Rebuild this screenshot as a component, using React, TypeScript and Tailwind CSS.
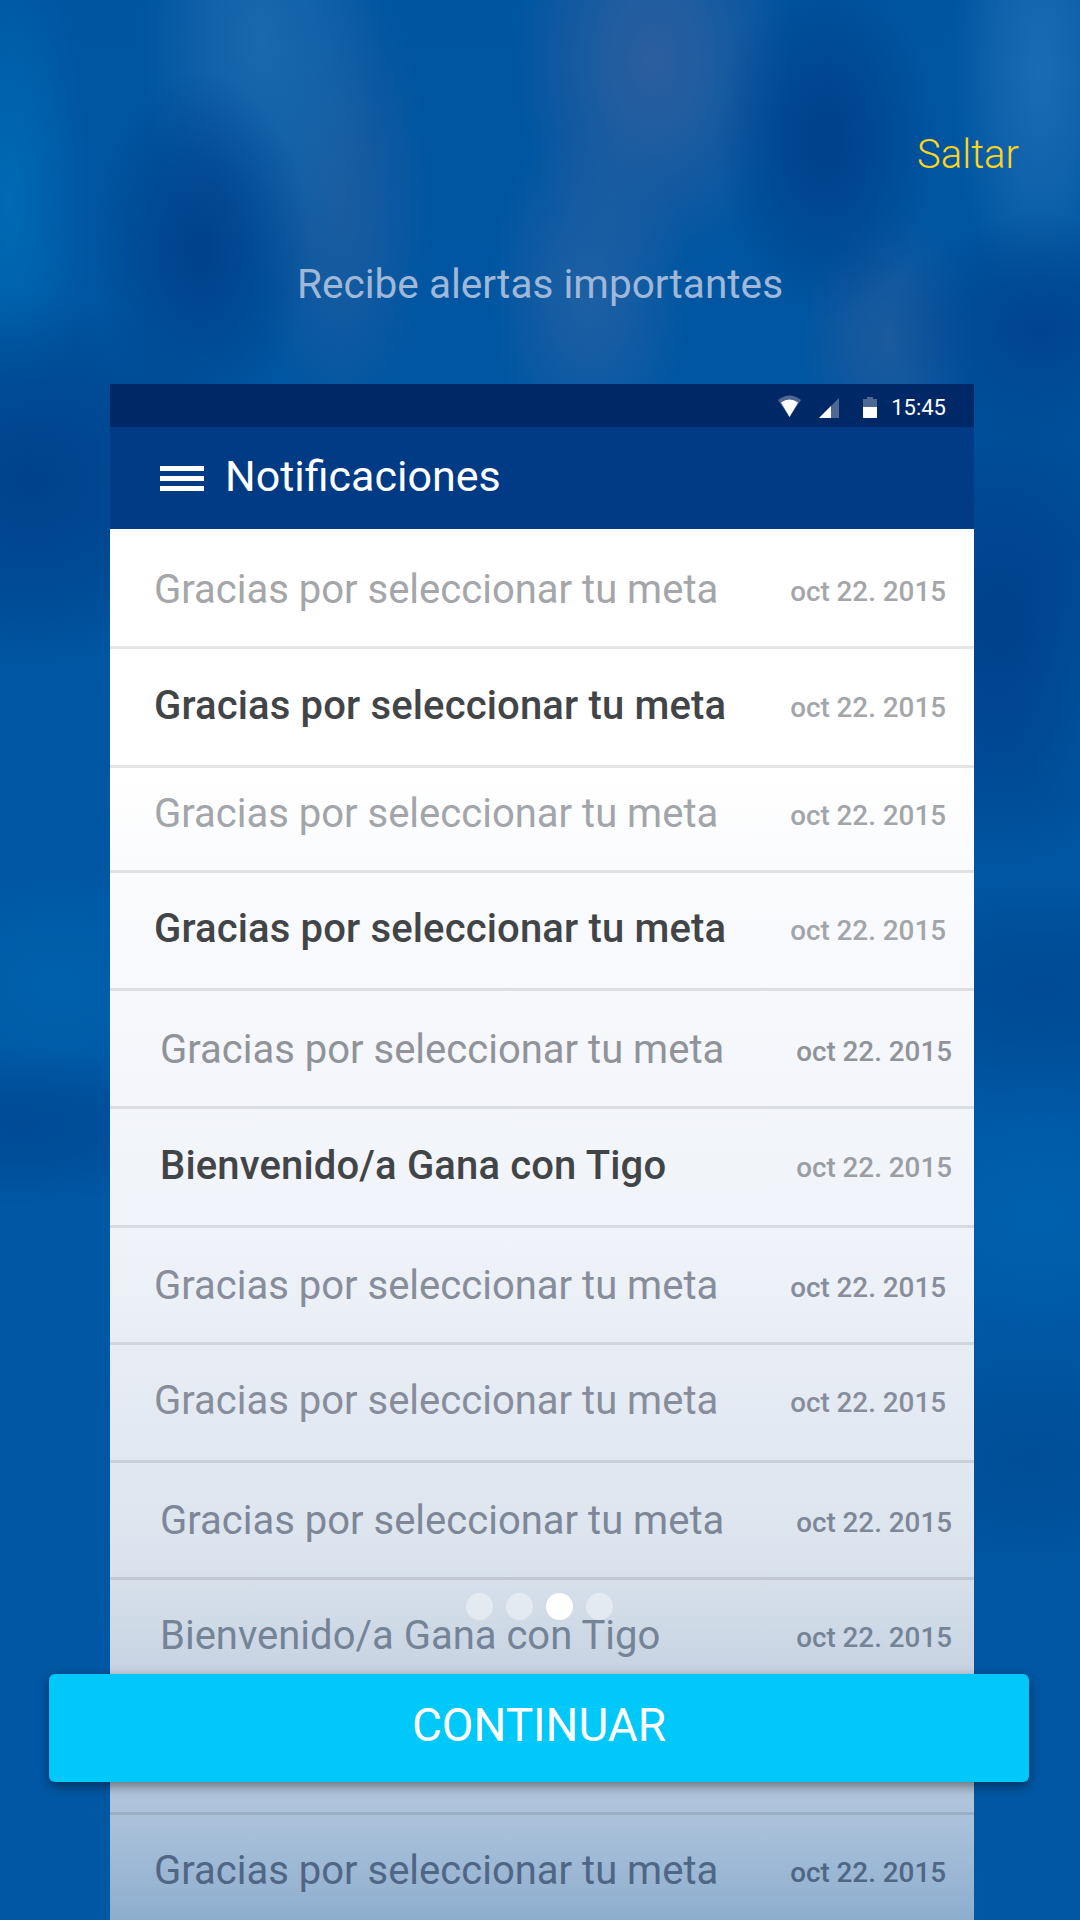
const rows = [
  { title: 'Gracias por seleccionar tu meta', h: 'h-[120px]', nudge: 'pt-[4px]', color: 'text-[#a4a6a9]' },
  { title: 'Gracias por seleccionar tu meta', bold: true, h: 'h-[119px]', nudge: 'pb-[3px]', color: 'text-[#a4a6a9]' },
  { title: 'Gracias por seleccionar tu meta', h: 'h-[105px]', nudge: 'pb-[10px]', color: 'text-[#a2a5a9]' },
  { title: 'Gracias por seleccionar tu meta', bold: true, h: 'h-[118px]', nudge: 'pb-[3px]', color: 'text-[#a2a5a9]' },
  { title: 'Gracias por seleccionar tu meta', shift: true, h: 'h-[118px]', nudge: 'pt-[2px]', color: 'text-[#909399]' },
  { title: 'Bienvenido/a Gana con Tigo', bold: true, shift: true, h: 'h-[119px]', nudge: 'pb-[3px]', color: 'text-[#9a9da3]' },
  { title: 'Gracias por seleccionar tu meta', h: 'h-[117px]', nudge: 'pt-[1px]', color: 'text-[#878d9b]' },
  { title: 'Gracias por seleccionar tu meta', h: 'h-[118px]', nudge: 'pb-[3px]', color: 'text-[#878d9b]' },
  { title: 'Gracias por seleccionar tu meta', shift: true, h: 'h-[117px]', nudge: 'pt-[2px]', color: 'text-[#7d8797]' },
  { title: 'Bienvenido/a Gana con Tigo', shift: true, h: 'h-[117px]', nudge: 'pb-[2px]', color: 'text-[#748496]' },
  { title: '', h: 'h-[118px]', nudge: 'pb-[0px]', color: 'text-[#748496]' },
  { title: 'Gracias por seleccionar tu meta', h: 'h-[118px]', nudge: 'pb-[4px]', color: 'text-[#4f6685]' },
]

function StatusIcons() {
  return (
    <>
      <svg className="mt-[1px]" width="23" height="22" viewBox="0 0 23 22">
        <path d="M0 5 Q11.500 -4 23 5 L11.500 22 Z" fill="#ffffff" fillOpacity="0.3" />
        <path d="M3 7.500 Q11.500 1.500 20 7.500 L11.500 22 Z" fill="#ffffff" />
      </svg>
      <svg className="ml-[18px] mt-[5px]" width="20" height="20" viewBox="0 0 20 20">
        <path d="M0 20 L20 0 V20 Z" fill="#ffffff" fillOpacity="0.3" />
        <path d="M0 20 L12 8 V20 Z" fill="#ffffff" />
      </svg>
      <svg className="ml-[24px] mt-[4px]" width="14" height="21" viewBox="0 0 14 21">
        <path d="M4 0 H10 V2 H14 V21 H0 V2 H4 Z" fill="#ffffff" fillOpacity="0.3" />
        <path d="M0 10 H14 V20 Q14 21 13 21 H1 Q0 21 0 20 Z" fill="#ffffff" />
      </svg>
    </>
  )
}

export default function App() {
  return (
    <div className="relative w-[1080px] h-[1920px] overflow-hidden font-['Roboto',sans-serif] bg-[radial-gradient(ellipse_110px_180px_at_200px_250px,#00428b,#00428bb0_40%,transparent),radial-gradient(ellipse_110px_180px_at_826px_140px,#00418a,#00418ab0_40%,transparent),radial-gradient(ellipse_150px_120px_at_1040px_330px,#00448e,#00448eb0_40%,transparent),radial-gradient(ellipse_190px_260px_at_1000px_620px,#00428c,#00428cb0_50%,transparent),radial-gradient(ellipse_220px_190px_at_30px_480px,#00438c,#00438cb0_50%,transparent),radial-gradient(ellipse_200px_80px_at_20px_1126px,#004a96,#004a96b0_40%,transparent),radial-gradient(ellipse_220px_120px_at_1040px_989px,#004a94,#004a94b0_40%,transparent),radial-gradient(ellipse_220px_130px_at_1030px_1460px,#004e98,#004e98b0_40%,transparent),radial-gradient(ellipse_140px_210px_at_654px_60px,#2b5f9f,#2b5f9fb0_40%,transparent),radial-gradient(ellipse_120px_240px_at_262px_40px,#1a68ad,#1a68adb0_40%,transparent),radial-gradient(ellipse_90px_240px_at_1040px_70px,#1a6cb2,#1a6cb2b0_40%,transparent),radial-gradient(ellipse_90px_230px_at_340px_200px,#1b5c9f,#1b5c9fb0_40%,transparent),radial-gradient(ellipse_100px_170px_at_590px_290px,#1e5fa3,#1e5fa3b0_40%,transparent),radial-gradient(ellipse_90px_130px_at_890px_340px,#1b5a9d,#1b5a9db0_40%,transparent),radial-gradient(ellipse_80px_260px_at_10px_200px,#006ab4,transparent),radial-gradient(ellipse_180px_130px_at_60px_985px,#0060ab,#0060abb0_40%,transparent),radial-gradient(ellipse_60px_130px_at_1075px_675px,#0068b3,transparent),radial-gradient(ellipse_200px_130px_at_1040px_1215px,#0060ad,#0060adb0_40%,transparent),linear-gradient(#0055a1,#0058a5)]">
      <div className="flex justify-end pt-[130px] pr-[61px]">
        <span className="text-[40px] leading-[50px] font-light text-[#ffd41c]">Saltar</span>
      </div>
      <h1 className="mt-[79px] text-center text-[40.6px] leading-[50px] font-normal text-[#a0b8d7]">Recibe alertas importantes</h1>

      <div className="mt-[75px] ml-[110px] w-[864px]">
        <div className="flex h-[43px] items-center justify-end bg-[#002766] pr-[28px]">
          <StatusIcons />
          <span className="ml-[14px] mt-[4px] text-[22px] leading-none text-white">15:45</span>
        </div>
        <div className="flex h-[102px] items-center gap-[21px] bg-[#013a85] pl-[50px]">
          <div className="flex w-[44px] flex-col gap-[5px]">
            <div className="h-[5px] bg-white" />
            <div className="h-[5px] bg-white" />
            <div className="h-[5px] bg-white" />
          </div>
          <span className="pb-[4px] text-[43px] leading-none text-white">Notificaciones</span>
        </div>

        <div className="bg-[linear-gradient(#ffffff_0%,#ffffff_17%,#fafbfd_25%,#f6f8fc_34%,#f0f3f9_50%,#e4eaf3_63%,#dbe4ee_73%,#c8d4e3_81%,#aec3db_91%,#a6bfd9_93%,#8aabcc_100%)]">
          {rows.map((row, i) => (
            <div key={i} className={`flex items-center justify-between border-b-[3px] border-black/10 ${row.h} ${row.nudge} ${row.shift ? 'pl-[50px] pr-[22px]' : 'pl-[44px] pr-[28px]'}`}>
              <span className={`text-[40px] leading-none ${row.bold ? 'font-medium tracking-[0.15px] text-[#424548]' : row.color}`}>{row.title}</span>
              {row.title && <span className={`mt-[4px] text-[27.8px] leading-none font-medium ${row.color}`}>oct 22. 2015</span>}
            </div>
          ))}
        </div>
      </div>

      <div className="absolute left-[466px] top-[1593px] flex gap-[13px]">
        <div className="size-[27px] rounded-full bg-white/40" />
        <div className="size-[27px] rounded-full bg-white/40" />
        <div className="size-[27px] rounded-full bg-white" />
        <div className="size-[27px] rounded-full bg-white/40" />
      </div>

      <button className="absolute left-[49px] top-[1674px] flex h-[108px] w-[980px] items-center justify-center rounded-[6px] bg-[#00c8f9] pb-[6px] text-[46px] font-normal text-white shadow-[0_4px_12px_rgba(0,0,0,0.45)]">
        CONTINUAR
      </button>
    </div>
  )
}
